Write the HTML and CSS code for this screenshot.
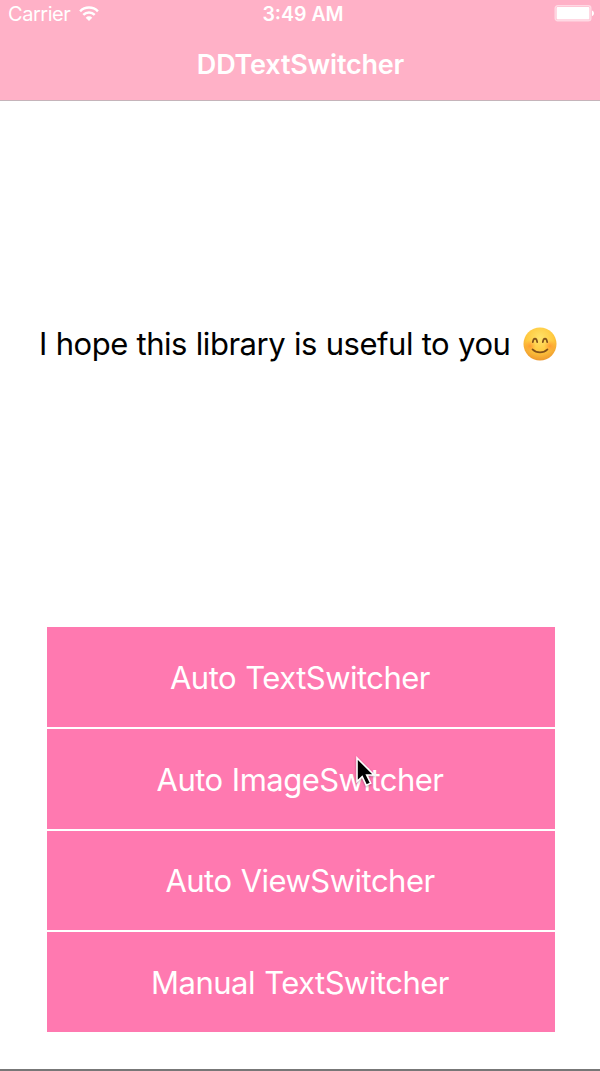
FILE: index.html
```html
<!DOCTYPE html>
<html lang="en">
<head>
<meta charset="utf-8">
<title>DDTextSwitcher</title>
<link rel="stylesheet" href="styles.css">
</head>
<body>
<div class="screen">
  <header class="top">
    <div class="status">
      <div class="carrier"><span>Carrier</span>
        <svg class="wifi" width="20" height="15" viewBox="0 0 20 15" fill="none" stroke="#fff" stroke-width="2.5"><path d="M1.1 5.3a12.6 12.6 0 0 1 17.8 0"/><path d="M4.3 8.9a8.1 8.1 0 0 1 11.4 0"/><path d="M6.7 11.7a4.7 4.7 0 0 1 6.6 0L10 15z" fill="#fff" stroke="none"/></svg>
      </div>
      <span class="time">3:49 AM</span>
      <svg class="battery" width="41" height="17" viewBox="0 0 41 17"><rect x="1.2" y=".7" width="35.6" height="15" rx="2.5" fill="#ffb1c7" stroke="#ffd9e4" stroke-width="1.4"/><rect x="2.5" y="2" width="33" height="12.5" rx="1" fill="#fff"/><path d="M38 5.5c2.6.6 2.6 5 0 5.6z" fill="#fff"/></svg>
    </div>
    <h1 class="title">DDTextSwitcher</h1>
  </header>
  <main class="content">
    <p class="message"><span class="phrase">I hope this library is useful to you</span>
      <svg class="smile" width="34" height="34" viewBox="0 0 34 34"><defs><radialGradient id="face" cx=".5" cy=".32" r=".68"><stop offset="0" stop-color="#ffe36a"/><stop offset=".6" stop-color="#ffc93f"/><stop offset="1" stop-color="#ee982d"/></radialGradient><radialGradient id="cheek"><stop offset="0" stop-color="#ff7b29" stop-opacity=".6"/><stop offset="1" stop-color="#ff8a2c" stop-opacity="0"/></radialGradient></defs><circle cx="17" cy="17" r="16.5" fill="url(#face)"/><circle cx="7" cy="19" r="6" fill="url(#cheek)"/><circle cx="27" cy="19" r="6" fill="url(#cheek)"/><g fill="none" stroke="#82501a" stroke-width="1.7" stroke-linecap="round"><path d="M9.8 15.2c.6-4.8 3.8-4.8 4.4 0M19.8 15.2c.6-4.8 3.8-4.8 4.4 0"/><path d="M9.5 22.3c4 4 11 4 15 0"/></g></svg>
    </p>
    <nav class="menu">
      <button class="item">Auto TextSwitcher</button>
      <button class="item">Auto ImageSwitcher
        <svg class="cursor" width="22" height="32" viewBox="0 0 22 32"><path d="M2 2v23.5l5.2-4.8 4 8.5 4.5-2-4-8.2h7.3z" fill="#000" stroke="#fff" stroke-width="1.6"/></svg>
      </button>
      <button class="item">Auto ViewSwitcher</button>
      <button class="item">Manual TextSwitcher</button>
    </nav>
  </main>
</div>
</body>
</html>
```
FILE: styles.css
```css
* { box-sizing: border-box; }
body { margin: 0; background: #fff; font-family: Inter, "Liberation Sans", sans-serif; }
.screen { width: 600px; height: 1071px; display: flex; flex-direction: column; border-bottom: 2px solid #777; overflow: hidden; }
.top { height: 101px; background: #ffb1c7; border-bottom: 1px solid #c5b4ba; color: #fff; }
.status { height: 28px; display: grid; grid-template-columns: 1fr auto 1fr; align-items: center; padding: 0 5px 0 8px; font-size: 20px; line-height: 28px; }
.carrier { display: flex; align-items: center; gap: 9px; letter-spacing: -0.45px; }
.wifi { display: block; margin-top: -2px; }
.time { font-weight: 600; font-size: 19.5px; letter-spacing: 0; margin-left: 3px; }
.battery { justify-self: end; margin-top: -1px; }
.title { margin: 0; padding-left: 1px; text-align: center; font-size: 27px; line-height: 74px; font-weight: 600; letter-spacing: -0.2px; }
.content { flex: 1; display: flex; flex-direction: column; }
.message { height: 526px; margin: 0; padding: 0 43px 41px 39px; display: flex; align-items: center; justify-content: space-between; color: #000; font-size: 31px; white-space: nowrap; }
.phrase { letter-spacing: -0.48px; word-spacing: 0.6px; }
.smile { flex: none; }
.menu { width: 508px; height: 405px; margin-left: 47px; display: grid; grid-template-rows: repeat(4, 1fr); gap: 2px; }
.item { position: relative; padding: 1px 2px 0 0; border: 0; background: #ff79b0; color: #fff; font: 400 31px Inter, "Liberation Sans", sans-serif; letter-spacing: -0.52px; word-spacing: 1px; }
.cursor { position: absolute; left: 308px; top: 27px; filter: drop-shadow(0 1px 1px rgba(0, 0, 0, 0.3)); }
```
